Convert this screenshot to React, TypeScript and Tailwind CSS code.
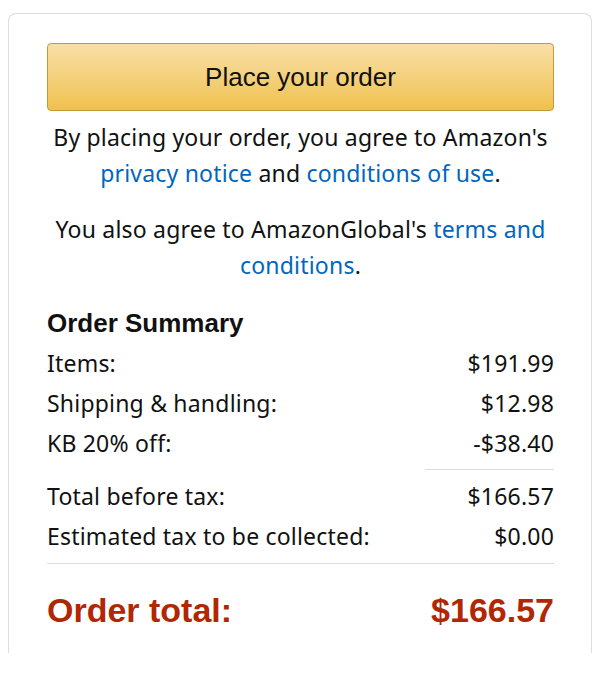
import React from 'react';

const rows = [
  { label: 'Items:', value: '$191.99' },
  { label: 'Shipping & handling:', value: '$12.98' },
  { label: 'KB 20% off:', value: '-$38.40' },
];

const Row = ({ label, value }: { label: string; value: string }) => (
  <div className="flex justify-between items-center h-[40px]">
    <span>{label}</span>
    <span>{value}</span>
  </div>
);

export default function App() {
  return (
    <div className="bg-white w-[600px] h-[678px] pt-[13px] px-[8px]">
      <div
        className="h-[640px] border border-b-0 border-[#dddddd] rounded-t-[8px] pl-[38px] pr-[37px] pt-[29px] text-[#111111] text-[23px] tracking-[0.2px]"
        style={{ fontFamily: '"Noto Sans", sans-serif' }}
      >
        <button
          className="w-full h-[68px] rounded-[4px] border border-[#c49a38] bg-gradient-to-b from-[#f7dfa5] to-[#f0c14b] text-[26px] tracking-normal text-[#111111]"
          style={{ fontFamily: '"Liberation Sans", Arial, sans-serif' }}
        >
          Place your order
        </button>

        <p className="text-center leading-[36px] mt-[8px]">
          By placing your order, you agree to Amazon's{' '}
          <a className="text-[#0066c0]">privacy notice</a> and{' '}
          <a className="text-[#0066c0]">conditions of use</a>.
        </p>
        <p className="text-center leading-[36px] mt-[20px]">
          You also agree to AmazonGlobal's{' '}
          <a className="text-[#0066c0]">terms and conditions</a>.
        </p>

        <h3
          className="font-bold text-[26px] tracking-normal mt-[22px] leading-[36px]"
          style={{ fontFamily: '"Liberation Sans", Arial, sans-serif' }}
        >
          Order Summary
        </h3>
        <div className="mt-[2px]">
          {rows.map((r) => (
            <Row key={r.label} label={r.label} value={r.value} />
          ))}
        </div>
        <div className="flex justify-end mt-[6px]">
          <div className="w-[129px] border-t border-[#dddddd]" />
        </div>
        <div className="mt-[6px]">
          <Row label="Total before tax:" value="$166.57" />
          <Row label="Estimated tax to be collected:" value="$0.00" />
        </div>
        <div className="border-t border-[#dddddd] mt-[7px]" />
        <div
          className="flex justify-between items-center h-[92px] font-bold text-[34px] tracking-normal text-[#b12704]"
          style={{ fontFamily: '"Liberation Sans", Arial, sans-serif' }}
        >
          <span>Order total:</span>
          <span>$166.57</span>
        </div>
      </div>
    </div>
  );
}
